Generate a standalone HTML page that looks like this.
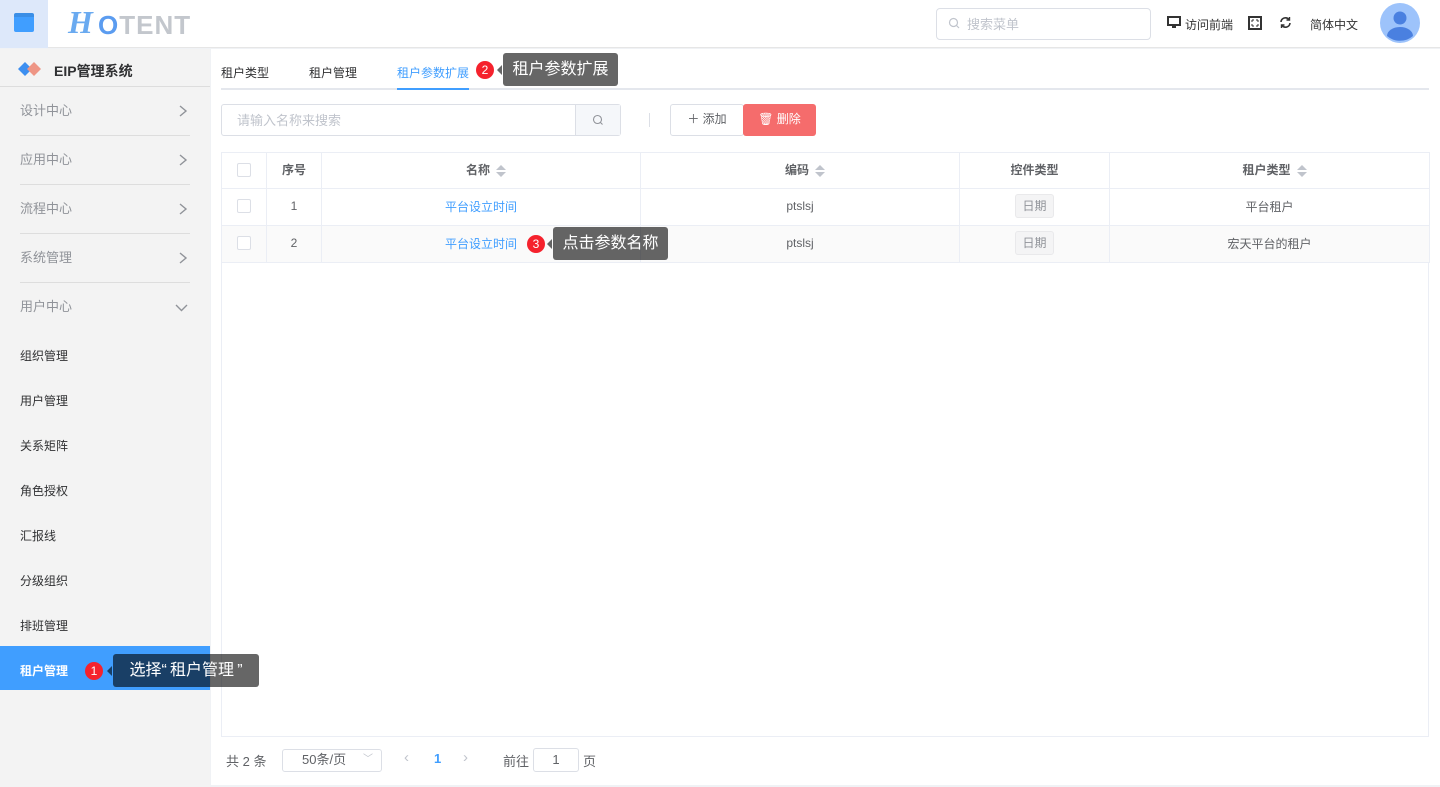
<!DOCTYPE html>
<html><head><meta charset="utf-8"><style>
*{box-sizing:border-box;margin:0;padding:0}
body{width:1440px;height:787px;overflow:hidden;background:#f0f2f5;font-family:"Liberation Sans","Noto Sans CJK SC",sans-serif;font-size:12px;color:#606266;position:relative}
.a{position:absolute}
.hdr{left:0;top:0;width:1440px;height:48px;background:#fff;border-bottom:1px solid #e6e6e6}
.side{left:0;top:49px;width:210px;height:738px;background:#f3f3f3}
.mi{position:absolute;left:20px;width:170px;height:49px;border-bottom:1px solid #ddd;font-size:13px;color:#909399;line-height:47px}
.mi svg{position:absolute;right:2px;top:18px}
.si{position:absolute;left:20px;font-size:12px;color:#303133}
.main{left:211px;top:49px;width:1229px;height:736px;background:#fff}
.tip{background:rgba(0,0,0,.6);color:#fff;font-size:16px;border-radius:3px;height:33px;line-height:33px;white-space:nowrap;text-align:center}
.tip:before{content:"";position:absolute;left:-6px;top:12px;border:5px solid transparent;border-right-color:rgba(0,0,0,.6);border-left:0;width:0;height:0}
.badge{width:18px;height:18px;border-radius:9px;background:#f5222d;color:#fff;font-size:12px;text-align:center;line-height:18px}
table{border-collapse:collapse;position:absolute;left:221px;top:152px;width:1208px;table-layout:fixed}
td,th{border:1px solid #ebeef5;text-align:center;height:37px;font-size:12px;color:#606266;font-weight:normal;padding-bottom:2px}
th{color:#606266;font-weight:bold;height:36px}
.cb{display:inline-block;width:14px;height:14px;border:1px solid #dcdfe6;border-radius:2px;background:#fff;vertical-align:middle}
.srt{display:inline-block;width:0;height:12px;vertical-align:middle;margin-left:6px;position:relative}
.srt:before{content:"";position:absolute;left:0;top:0;border:5px solid transparent;border-bottom:5px solid #c0c4cc;border-top:0}
.srt:after{content:"";position:absolute;left:0;top:7px;border:5px solid transparent;border-top:5px solid #c0c4cc;border-bottom:0}
.lnk{color:#409eff}
.tag{display:inline-block;border:1px solid #e9e9eb;background:#f4f4f5;color:#909399;border-radius:3px;padding:0 6px;height:24px;line-height:22px}
</style></head><body>
<div class="a hdr"></div>
<div class="a" style="left:0;top:0;width:48px;height:48px;background:#dde8fa"></div>
<div class="a" style="left:14px;top:13px;width:20px;height:19px;background:#409eff;border-radius:2px;border-top:4px solid #3a8ee6"></div>
<div class="a" style="left:68px;top:4px;font-size:32px;font-weight:bold;color:#6aaaf0;font-style:italic;font-family:'Liberation Serif',serif">H</div>
<div class="a" style="left:98px;top:10px;font-size:26px;font-weight:bold;color:#c3c7cd;letter-spacing:1px"><span style="color:#5b9cf0">O</span>TENT</div>
<div class="a" style="left:936px;top:8px;width:215px;height:32px;border:1px solid #dcdfe6;border-radius:4px"></div>
<svg class="a" style="left:948px;top:17px" width="12" height="12" viewBox="0 0 12 12"><circle cx="5.5" cy="5.5" r="4" fill="none" stroke="#c0c4cc" stroke-width="1.2"/><path d="M8.5 8.5l2.5 2.5" stroke="#c0c4cc" stroke-width="1.2"/></svg>
<div class="a" style="left:967px;top:14px;font-size:13px;color:#c0c4cc">搜索菜单</div>
<svg class="a" style="left:1167px;top:16px" width="14" height="13" viewBox="0 0 14 13"><rect x="1" y="1" width="12" height="8" fill="none" stroke="#333" stroke-width="2"/><rect x="5" y="10" width="4" height="2" fill="#333"/></svg>
<div class="a" style="left:1185px;top:16px;font-size:12px;color:#333">访问前端</div>
<svg class="a" style="left:1248px;top:16px" width="14" height="14" viewBox="0 0 14 14"><rect x="1" y="1" width="12" height="12" fill="none" stroke="#333" stroke-width="2"/><path d="M4 4h2M4 4v2M10 4H8M10 4v2M4 10h2M4 10V8M10 10H8M10 10V8" stroke="#333"/></svg>
<svg class="a" style="left:1279px;top:16px" width="13" height="13" viewBox="0 0 13 13"><path d="M2 6a4.5 4.5 0 0 1 8-2.5M11 7a4.5 4.5 0 0 1-8 2.5" fill="none" stroke="#333" stroke-width="1.6"/><path d="M10.5 1v3h-3M2.5 12V9h3" fill="none" stroke="#333" stroke-width="1.4"/></svg>
<div class="a" style="left:1310px;top:16px;font-size:12px;color:#333">简体中文</div>
<svg class="a" style="left:1380px;top:3px" width="40" height="40" viewBox="0 0 40 40"><circle cx="20" cy="20" r="20" fill="#9dc3fb"/><circle cx="20" cy="15" r="6.5" fill="#4a80e0"/><path d="M7 33a13 9 0 0 1 26 0a20 20 0 0 1-26 0z" fill="#4a80e0"/></svg>

<div class="a side"></div>
<svg class="a" style="left:18px;top:62px" width="24" height="14" viewBox="0 0 24 14"><path d="M7 0l7 7-7 7-7-7z" fill="#3d8ff0"/><path d="M16 0l7 7-7 7-7-7z" fill="#ee9585"/></svg>
<div class="a" style="left:54px;top:61px;font-size:14px;font-weight:bold;color:#303133">EIP管理系统</div>
<div class="a" style="left:0;top:86px;width:210px;height:1px;background:#ddd"></div>
<div class="mi" style="top:87px">设计中心<svg width="10" height="12" viewBox="0 0 10 12"><path d="M2 1l6 5-6 5" fill="none" stroke="#909399" stroke-width="1.4"/></svg></div>
<div class="mi" style="top:136px">应用中心<svg width="10" height="12" viewBox="0 0 10 12"><path d="M2 1l6 5-6 5" fill="none" stroke="#909399" stroke-width="1.4"/></svg></div>
<div class="mi" style="top:185px">流程中心<svg width="10" height="12" viewBox="0 0 10 12"><path d="M2 1l6 5-6 5" fill="none" stroke="#909399" stroke-width="1.4"/></svg></div>
<div class="mi" style="top:234px">系统管理<svg width="10" height="12" viewBox="0 0 10 12"><path d="M2 1l6 5-6 5" fill="none" stroke="#909399" stroke-width="1.4"/></svg></div>
<div class="mi" style="top:283px;border:0">用户中心<svg width="13" height="10" viewBox="0 0 13 10" style="top:20px"><path d="M1 2l5.5 5.5L12 2" fill="none" stroke="#909399" stroke-width="1.4"/></svg></div>
<div class="si" style="top:347px">组织管理</div>
<div class="si" style="top:392px">用户管理</div>
<div class="si" style="top:437px">关系矩阵</div>
<div class="si" style="top:482px">角色授权</div>
<div class="si" style="top:527px">汇报线</div>
<div class="si" style="top:572px">分级组织</div>
<div class="si" style="top:617px">排班管理</div>
<div class="a" style="left:0;top:646px;width:210px;height:44px;background:#409eff"></div>
<div class="si" style="top:662px;color:#fff;font-weight:bold">租户管理</div>

<div class="a main"></div>
<div class="a" style="left:221px;top:64px;font-size:12px;color:#303133">租户类型</div>
<div class="a" style="left:309px;top:64px;font-size:12px;color:#303133">租户管理</div>
<div class="a" style="left:397px;top:64px;font-size:12px;color:#409eff">租户参数扩展</div>
<div class="a" style="left:221px;top:88px;width:1208px;height:2px;background:#e4e7ed"></div>
<div class="a" style="left:397px;top:88px;width:72px;height:2px;background:#409eff"></div>

<div class="a" style="left:221px;top:104px;width:400px;height:32px;border:1px solid #dcdfe6;border-radius:3px"></div>
<div class="a" style="left:575px;top:105px;width:45px;height:30px;background:#f5f7fa;border-left:1px solid #dcdfe6"></div>
<svg class="a" style="left:592px;top:114px" width="12" height="12" viewBox="0 0 12 12"><circle cx="5.5" cy="5.5" r="4" fill="none" stroke="#909399" stroke-width="1.1"/><path d="M8.5 8.5l2 2" stroke="#909399" stroke-width="1.1"/></svg>
<div class="a" style="left:237px;top:110px;font-size:13px;color:#c0c4cc">请输入名称来搜索</div>
<div class="a" style="left:649px;top:113px;width:1px;height:14px;background:#dcdfe6"></div>
<div class="a" style="left:670px;top:104px;width:74px;height:32px;border:1px solid #dcdfe6;border-radius:3px;font-size:12px;color:#606266;line-height:28px;text-align:center">＋ 添加</div>
<div class="a" style="left:743px;top:104px;width:73px;height:32px;background:#f56c6c;border-radius:3px;font-size:12px;color:#fff;line-height:30px;text-align:center">🗑 删除</div>

<table>
<colgroup><col style="width:45px"><col style="width:55px"><col style="width:319px"><col style="width:319px"><col style="width:150px"><col style="width:320px"></colgroup>
<tr><th><span class="cb"></span></th><th>序号</th><th>名称<span class="srt"></span></th><th>编码<span class="srt"></span></th><th>控件类型</th><th>租户类型<span class="srt"></span></th></tr>
<tr><td><span class="cb"></span></td><td>1</td><td class="lnk">平台设立时间</td><td>ptslsj</td><td><span class="tag">日期</span></td><td>平台租户</td></tr>
<tr style="background:#fafafa"><td><span class="cb"></span></td><td>2</td><td class="lnk">平台设立时间</td><td>ptslsj</td><td><span class="tag">日期</span></td><td>宏天平台的租户</td></tr>
</table>
<div class="a" style="left:221px;top:262px;width:1208px;height:475px;border:1px solid #ebeef5;border-top:0"></div>

<div class="a" style="left:226px;top:751px;font-size:13px">共 2 条</div>
<div class="a" style="left:282px;top:749px;width:100px;height:23px;border:1px solid #dcdfe6;border-radius:3px;font-size:13px;line-height:20px;padding-left:19px">50条/页<span style="position:absolute;right:8px;top:0;color:#c0c4cc;font-size:10px">﹀</span></div>
<div class="a" style="left:404px;top:749px;font-size:15px;color:#c0c4cc">‹</div>
<div class="a" style="left:434px;top:751px;font-size:13px;color:#409eff;font-weight:bold">1</div>
<div class="a" style="left:463px;top:749px;font-size:15px;color:#c0c4cc">›</div>
<div class="a" style="left:503px;top:751px;font-size:13px">前往</div>
<div class="a" style="left:533px;top:748px;width:46px;height:24px;border:1px solid #dcdfe6;border-radius:3px;font-size:13px;text-align:center;line-height:21px">1</div>
<div class="a" style="left:583px;top:751px;font-size:13px">页</div>

<div class="a badge" style="left:476px;top:61px">2</div>
<div class="a tip" style="left:503px;top:53px;width:115px">租户参数扩展</div>
<div class="a badge" style="left:527px;top:235px">3</div>
<div class="a tip" style="left:553px;top:227px;width:115px">点击参数名称</div>
<div class="a badge" style="left:85px;top:662px">1</div>
<div class="a tip" style="left:113px;top:654px;width:146px">选择“&thinsp;租户管理&thinsp;”</div>
</body></html>
